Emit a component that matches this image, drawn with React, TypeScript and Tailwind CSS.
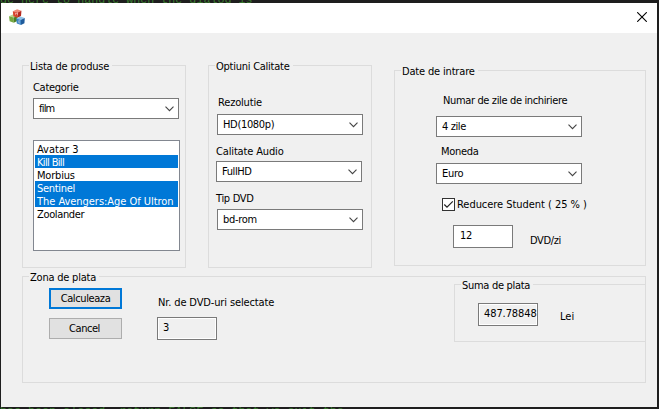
import type { ReactNode } from "react";

function Chevron() {
  return (
    <svg width="9" height="6" viewBox="0 0 9 6" className="shrink-0" fill="none" stroke="#444" strokeWidth="1.1">
      <path d="M0.5 0.7 L4.5 4.7 L8.5 0.7" />
    </svg>
  );
}

function Text({ children, className = "" }: { children: ReactNode; className?: string }) {
  return <div className={`h-[13px] leading-[13px] whitespace-pre ${className}`}>{children}</div>;
}

function Combo({ value, className = "" }: { value: string; className?: string }) {
  return (
    <div className={`flex h-[21px] w-[146px] items-center justify-between border border-[#7a7a7a] bg-white pr-1 pl-[5px] ${className}`}>
      <span className="h-[13px] leading-[13px]">{value}</span>
      <Chevron />
    </div>
  );
}

function Group({ title, className = "", legend = "", body = "", children }: { title: string; className?: string; legend?: string; body?: string; children: ReactNode }) {
  return (
    <fieldset className={`min-w-0 shrink-0 border border-[#dcdcdc] ${className}`}>
      <legend className={`ml-1.5 h-[13px] pl-px leading-[15px] whitespace-pre ${legend}`}>{title}</legend>
      <div className={`flow-root ${body}`}>{children}</div>
    </fieldset>
  );
}

function Cube({ x, y, top, left, right }: { x: number; y: number; top: string; left: string; right: string }) {
  return (
    <g transform={`translate(${x} ${y}) scale(1.08)`}>
      <path d="M0 2 L4 0.3 L8 1.6 L4.4 3.2 Z" fill={top} />
      <path d="M0 2 L4.4 3.2 L4.4 8 L0.6 6.6 Z" fill={left} />
      <path d="M4.4 3.2 L8 1.6 L7.6 6.4 L4.4 8 Z" fill={right} />
    </g>
  );
}

const films = [
  { name: "Avatar 3", selected: false, spacing: "" },
  { name: "Kill Bill", selected: true, spacing: "tracking-[-0.65px]" },
  { name: "Morbius", selected: false, spacing: "tracking-[-0.2px]" },
  { name: "Sentinel", selected: true, spacing: "tracking-[-0.3px]" },
  { name: "The Avengers:Age Of Ultron", selected: true, spacing: "tracking-[-0.04px]" },
  { name: "Zoolander", selected: false, spacing: "tracking-[-0.35px]" },
];

export default function App() {
  return (
    <div className="flex h-[409px] w-[659px] flex-col overflow-hidden bg-[#1e1e1e] font-['DejaVu_Sans_Condensed','DejaVu_Sans',sans-serif] text-[11px] text-black [font-stretch:condensed]">
      <div className="flex h-[3px] shrink-0 items-end overflow-hidden font-['Liberation_Mono',monospace] text-[11.7px] leading-[6px] whitespace-pre text-[#3a7a2e]">
        de here to handle when the dialog is
      </div>

      <div className="ml-px h-[404px] w-[656px] shrink-0 bg-[#f0f0f0]">
        <div className="flex h-[30px] items-start justify-between bg-white pt-[6px] pr-[10px] pl-2">
          <svg width="16" height="16" viewBox="0 0 16 16">
            <Cube x={0} y={5} top="#b6d58c" left="#74a83e" right="#4d7f25" />
            <Cube x={3.8} y={0} top="#f08a78" left="#d8432f" right="#b52a20" />
            <Cube x={7.2} y={7.3} top="#8fc4ea" left="#3b86c8" right="#1f5c9c" />
            <path d="M6.5 5.8v-2l1 1 1-1v2M11 12l-1.2-.3v2l1.2 .3" stroke="#ffe3dd" strokeWidth=".5" fill="none" />
          </svg>
          <svg width="10" height="10" viewBox="0 0 10 10" className="mt-[3px]" stroke="#000" strokeWidth="1.1">
            <path d="M0.2 0.2 L9.8 9.8 M9.8 0.2 L0.2 9.8" />
          </svg>
        </div>

        <div className="flex h-[241px] items-start pt-[26px] pl-[21px]">
          <Group title="Lista de produse" className="h-[209px] w-[164px]" legend="w-[83px] tracking-[-0.17px]" body="pl-[10px]">
            <Text className="mt-[9px] tracking-[-0.3px]">Categorie</Text>
            <Combo value="film" className="mt-1 tracking-[-0.8px]" />
            <div className="mt-[21px] h-[111px] w-[147px] border border-[#828790] bg-white p-px">
              {films.map((f) => (
                <div key={f.name} className={`h-[13px] pl-0.5 leading-[15px] whitespace-nowrap ${f.spacing} ${f.selected ? "bg-[#0078d7] text-white" : ""}`}>
                  {f.name}
                </div>
              ))}
            </div>
          </Group>

          <Group title="Optiuni Calitate" className="ml-[22px] h-[209px] w-[164px]" legend="w-[78px] tracking-[-0.25px]" body="pl-[7px]">
            <Text className="mt-6 ml-0.5 tracking-[-0.17px]">Rezolutie</Text>
            <Combo value="HD(1080p)" className="mt-[5px] ml-px tracking-[-0.33px]" />
            <Text className="mt-[10px] tracking-[-0.15px]">Calitate Audio</Text>
            <Combo value="FullHD" className="mt-[3px] tracking-[-0.4px]" />
            <Text className="mt-[10px] tracking-[-0.3px]">Tip DVD</Text>
            <Combo value="bd-rom" className="mt-1 ml-px tracking-[-0.3px]" />
          </Group>

          <Group title="Date de intrare" className="mt-[5px] ml-[22px] h-[202px] w-[252px]" legend="w-[77px] tracking-[-0.17px]" body="pl-[41px]">
            <Text className="mt-[17px] ml-[7px] tracking-[-0.36px]">Numar de zile de inchiriere</Text>
            <Combo value="4 zile" className="mt-[9px] tracking-[-0.4px]" />
            <Text className="mt-2 ml-[5px] tracking-[-0.3px]">Moneda</Text>
            <Combo value="Euro" className="mt-[5px] tracking-[-0.3px]" />
            <div className="mt-[14px] ml-[6px] flex h-[13px] items-center">
              <span className="flex size-[13px] shrink-0 items-center justify-center border border-[#333] bg-white">
                <svg width="11" height="11" viewBox="0 0 11 11" className="shrink-0" fill="none" stroke="#222" strokeWidth="1.2">
                  <path d="M1.3 5.5 L4 8.2 L9.8 2.3" />
                </svg>
              </span>
              <Text className="ml-0.5 tracking-[-0.04px]">Reducere Student ( 25 % )</Text>
            </div>
            <div className="mt-[14px] ml-[17px] flex">
              <div className="h-[23px] w-[60px] border border-[#7a7a7a] bg-white pt-[3px] pl-[6px] leading-[13px] tracking-[-0.3px]">12</div>
              <Text className="mt-[9px] ml-[17px] tracking-[-0.35px]">DVD/zi</Text>
            </div>
          </Group>
        </div>

        <Group title="Zona de plata" className="-mt-1 ml-[21px] h-[113px] w-[624px]" legend="w-[70px] tracking-[-0.22px]">
          <div className="flex">
            <div className="mt-[5px] ml-[26px] flex w-[73px] flex-col gap-[9px]">
              <button className="h-[21px] border-2 border-[#0078d7] bg-[#e1e1e1] pt-px leading-[16px] tracking-[-0.4px]">Calculeaza</button>
              <button className="h-[21px] border border-[#adadad] bg-[#e1e1e1] pt-px pr-[2px] leading-[18px] tracking-[-0.45px]">Cancel</button>
            </div>
            <div className="mt-[13px] ml-[35px] w-[297px]">
              <Text className="ml-px tracking-[-0.13px]">Nr. de DVD-uri selectate</Text>
              <div className="mt-2 h-[23px] w-[60px] border border-[#7a7a7a] bg-[#f0f0f0] pt-[3px] pl-[5px] leading-[13px] shadow-[inset_0_0_0_1px_white]">3</div>
            </div>
            <Group title="Suma de plata" className="-mt-[5px] -mr-px h-[64px] w-[192px]" legend="w-[72px] tracking-[-0.3px]">
              <div className="mt-3 ml-[23px] flex">
                <div className="h-[23px] w-[60px] border border-[#7a7a7a] bg-[#f0f0f0] pt-[3px] pl-[5px] leading-[13px] tracking-[-0.1px] shadow-[inset_0_0_0_1px_white]">487.78848</div>
                <Text className="mt-[7px] ml-[22px]">Lei</Text>
              </div>
            </Group>
          </div>
        </Group>
      </div>

      <div className="h-[2px] shrink-0 overflow-hidden font-['Liberation_Mono',monospace] text-[11.7px] leading-[9px] whitespace-pre text-[#3a7a2e]">
        has been closed, return FALSE so that we exit the
      </div>
    </div>
  );
}
